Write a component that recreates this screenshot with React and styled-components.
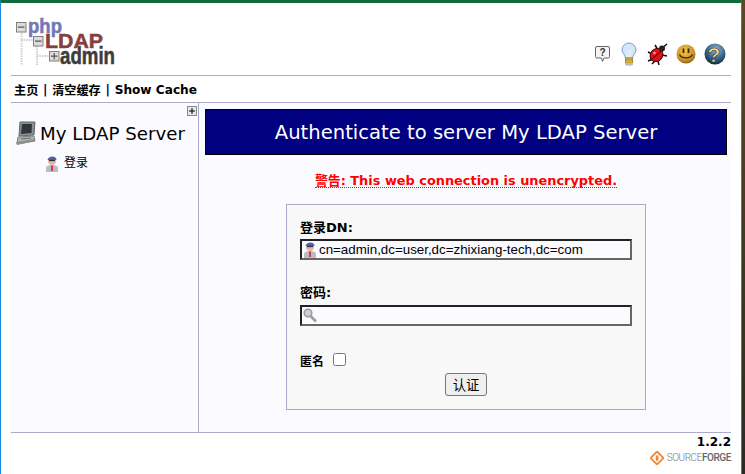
import React from 'react';
import styled, { createGlobalStyle } from 'styled-components';

const GlobalStyle = createGlobalStyle`
  html, body {
    margin: 0;
    padding: 0;
    background: #3a3324;
    overflow: hidden;
  }
`;

const Screen = styled.div`
  width: 745px;
  height: 474px;
  display: flex;
  background: linear-gradient(180deg, #5a4a22, #2c2a22);
  font-family: "DejaVu Sans", "Noto Sans CJK SC", sans-serif;
  color: #000;
`;

const Window = styled.div`
  width: 742px;
  height: 474px;
  box-sizing: border-box;
  border-left: 1px solid #1a8ae0;
  border-right: 1px solid #1a8ae0;
  border-top: 3px solid #0f6b3a;
  background: #fff;
  padding: 0 10px;
  display: flex;
  flex-direction: column;
`;

const Header = styled.header`
  height: 73px;
  box-sizing: border-box;
  flex: none;
  display: flex;
  justify-content: space-between;
  align-items: flex-end;
  border-bottom: 1px solid #aaaacc;
`;

const Logo = styled.svg`
  width: 104px;
  height: 55px;
  margin: 0 0 4px 3px;
`;

const IconBar = styled.div`
  display: flex;
  align-items: center;
  gap: 8px;
  margin: 0 5px 9px 0;
`;

const Menu = styled.nav`
  height: 27px;
  box-sizing: border-box;
  flex: none;
  display: flex;
  align-items: center;
  padding: 1px 0 0 3px;
  font-size: 12.15px;
  font-weight: bold;
  white-space: pre;
  border-bottom: 1px solid #aaaacc;
`;

const MenuSep = styled.span`
  color: #000050;
  margin: 0 0.5px;
`;

const Body = styled.div`
  height: 329px;
  flex: none;
  display: flex;
  background: #fbfbff;
  border-bottom: 1px solid #aaaacc;
`;

const Sidebar = styled.aside`
  width: 188px;
  box-sizing: border-box;
  flex: none;
  border-right: 1px solid #aaaacc;
  display: flex;
  flex-direction: column;
`;

const ExpandRow = styled.div`
  display: flex;
  justify-content: flex-end;
  padding: 3px 1px 0 0;
  height: 14px;
`;

const ServerRow = styled.div`
  display: flex;
  align-items: center;
  gap: 4px;
  padding: 1px 0 0 4px;
  font-size: 18.2px;
  line-height: 24px;
  white-space: nowrap;
`;

const LoginRow = styled.div`
  display: flex;
  align-items: center;
  gap: 5px;
  padding: 8px 0 0 34px;
  font-size: 12px;
  line-height: 18px;
`;

const Main = styled.main`
  width: 522px;
  margin-left: 6px;
  padding-top: 6px;
  display: flex;
  flex-direction: column;
  align-items: center;
`;

const Title = styled.h1`
  width: 100%;
  height: 46px;
  box-sizing: border-box;
  margin: 0;
  padding-top: 1px;
  display: flex;
  align-items: center;
  justify-content: center;
  background: #000080;
  border: 1px solid #000;
  color: #fff;
  font-size: 19.6px;
  font-weight: normal;
  white-space: nowrap;
`;

const Warning = styled.p`
  margin: 17px 0 16px;
  font-size: 12.9px;
  line-height: 17px;
  font-weight: bold;
  color: #ff0000;
  white-space: nowrap;
  border-bottom: 1px dotted #ff0000;
  height: 15px;
`;

const LoginForm = styled.form`
  width: 360px;
  height: 206px;
  box-sizing: border-box;
  border: 1px solid #aaaacc;
  background: #f8f8f8;
  padding: 13px 13px 0;
  display: flex;
  flex-direction: column;
`;

const FieldLabel = styled.label`
  font-size: 13px;
  line-height: 20px;
  font-weight: bold;
`;

const AnonLabel = styled.label`
  font-size: 12px;
  line-height: 20px;
  font-weight: bold;
  margin-top: 2px;
`;

const InputBox = styled.div`
  width: 332px;
  height: 21px;
  box-sizing: border-box;
  margin: ${(p) => p.$top}px 0 ${(p) => p.$bottom}px;
  display: flex;
  align-items: center;
  gap: 2px;
  padding-left: 1px;
  background: #fbfbff;
  border: 2px solid;
  border-color: #222 #666 #666 #222;
`;

const TextInput = styled.input`
  flex: 1;
  min-width: 0;
  border: 0;
  padding: 0;
  outline: 0;
  background: transparent;
  font-family: "Liberation Sans", sans-serif;
  font-size: 13.33px;
  color: #000;
`;

const AnonRow = styled.div`
  display: flex;
  align-items: center;
  gap: 9px;
  height: 16px;
`;

const AnonBox = styled.input`
  width: 13px;
  height: 13px;
  margin: 0 0 3px 0;
`;

const Submit = styled.button`
  align-self: center;
  width: 42px;
  height: 23px;
  margin: 4px 0 0;
  padding: 0;
  font-family: "Noto Sans CJK SC", sans-serif;
  font-size: 13.33px;
  color: #000;
  background: #efefef;
  border: 1px solid #767676;
  border-radius: 3px;
`;

const Footer = styled.footer`
  flex: 1;
  display: flex;
  flex-direction: column;
  align-items: flex-end;
  padding-top: 2px;
`;

const Version = styled.div`
  font-size: 12px;
  font-weight: bold;
  line-height: 15px;
`;

const ForgeLink = styled.div`
  display: flex;
  align-items: center;
  gap: 3px;
  margin-top: 1px;
  font-family: Roboto, sans-serif;
  font-size: 10px;
  font-weight: 300;
  line-height: 14px;
  color: #777;
  letter-spacing: -0.42px;
`;

const ForgeBold = styled.b`
  color: #666;
  font-weight: 500;
`;

const LogoImage = () => (
  <Logo viewBox="0 0 104 55">
    <path d="M7.500 17V49M7 24H19M23 30V49M23 40H35" stroke="#d0d0d0" strokeWidth="2" strokeDasharray="1.500 1" fill="none" />
    <g fill="#dcdcdc" stroke="#808080">
      <rect x="2.500" y="6.500" width="9.500" height="9.500" />
      <rect x="19.500" y="20.500" width="9.500" height="9.500" />
      <rect x="35.500" y="35.500" width="9.500" height="9.500" />
    </g>
    <path d="M4 11.200H10.500M21 25.200H27.500M37 40.200H43.500M40.200 37V43.500" stroke="#555" strokeWidth="1.200" />
    <g fontFamily="Liberation Sans" fontWeight="bold" strokeWidth=".5">
      <text x="14" y="17" fontSize="20" fill="#7478b4" stroke="#7478b4" textLength="34" lengthAdjust="spacingAndGlyphs">php</text>
      <text x="31" y="32" fontSize="21" fill="#843f3f" stroke="#843f3f" textLength="58" lengthAdjust="spacingAndGlyphs">LDAP</text>
      <text x="46" y="48" fontSize="23" fill="#3d3d3d" stroke="#3d3d3d" textLength="55" lengthAdjust="spacingAndGlyphs">admin</text>
    </g>
  </Logo>
);

const BubbleIcon = () => (
  <svg width="18" height="18" viewBox="0 0 18 18">
    <path d="M2 1.500H13A1.500 1.500 0 0 1 14.500 3V11.500A1.500 1.500 0 0 1 13 13H9L7.500 16.500L6.500 13H2A1.500 1.500 0 0 1 .5 11.500V3A1.500 1.500 0 0 1 2 1.500Z" fill="#f4f4f4" stroke="#666" />
    <text x="7.500" y="11" textAnchor="middle" fontFamily="Liberation Sans" fontWeight="bold" fontSize="10" fill="#333">?</text>
  </svg>
);

const BulbIcon = () => (
  <svg width="18" height="24" viewBox="0 0 18 24">
    <path d="M8 1A7 7 0 0 1 15 8C15 11 12 12.500 11.500 16H4.500C4 12.500 1 11 1 8A7 7 0 0 1 8 1Z" fill="#d6e6fa" stroke="#7f9fc8" />
    <path d="M6 7C7 9 7 12 7 15M10 7C9 9 9 12 9 15" fill="none" stroke="#f4f4f4" />
    <rect x="4.500" y="16" width="7" height="5" fill="#dcb94a" stroke="#a8892c" />
    <path d="M4.500 18H11.500" stroke="#a8892c" />
    <ellipse cx="8" cy="22.500" rx="4" ry="1.200" fill="#bbb" />
  </svg>
);

const BugIcon = () => (
  <svg width="21" height="22" viewBox="0 0 21 22">
    <path d="M11 7L8 2M5 11L1 9M6 16L1 18M11 18L12 22M15 12L20 13M14 6L20 1M9 17L5 21" stroke="#111" strokeWidth="1.500" fill="none" />
    <ellipse cx="9.500" cy="12" rx="6" ry="7" transform="rotate(40 9.500 12)" fill="#e01018" stroke="#500" />
    <path d="M5 16L14 8" stroke="#300" />
    <circle cx="15" cy="5.500" r="3" fill="#222" />
    <circle cx="7.500" cy="10" r="1.300" fill="#ff9a9a" />
  </svg>
);

const SmileIcon = () => (
  <svg width="20" height="21" viewBox="0 0 20 21">
    <defs>
      <radialGradient id="smile" cx="45%" cy="35%" r="70%">
        <stop offset="0%" stopColor="#f6c64a" />
        <stop offset="70%" stopColor="#c98f22" />
        <stop offset="100%" stopColor="#6f5520" />
      </radialGradient>
    </defs>
    <circle cx="10" cy="10" r="9.500" fill="url(#smile)" />
    <path d="M7.500 4.500V9M12.500 4.500V9" stroke="#3a2a08" strokeWidth="1.800" />
    <path d="M3.500 10.500C5.500 15 14.500 15 16.500 10.500" fill="none" stroke="#3a2a08" strokeWidth="1.300" />
  </svg>
);

const HelpIcon = () => (
  <svg width="22" height="22" viewBox="0 0 22 22">
    <defs>
      <radialGradient id="ball" cx="55%" cy="30%" r="75%">
        <stop offset="0%" stopColor="#9fb6c8" />
        <stop offset="55%" stopColor="#35688f" />
        <stop offset="100%" stopColor="#14222e" />
      </radialGradient>
    </defs>
    <circle cx="11" cy="11" r="10.500" fill="url(#ball)" />
    <text x="10" y="19" textAnchor="middle" fontFamily="Liberation Sans" fontWeight="bold" fontSize="21" fill="#f3dfa0" stroke="#2a2a1a" strokeWidth=".6">?</text>
  </svg>
);

const ExpandIcon = () => (
  <svg width="10" height="10" viewBox="0 0 10 10">
    <rect x=".5" y=".5" width="9" height="9" fill="#e8e8e8" stroke="#7f8f8f" />
    <path d="M2 5H8M5 2V8" stroke="#000" />
  </svg>
);

const ComputerIcon = () => (
  <svg width="21" height="25" viewBox="0 0 21 25">
    <path d="M5 1H20L19 14L4 15Z" fill="#8a8f92" stroke="#63676a" />
    <path d="M7 3H17L16.500 12L6 13Z" fill="#30373c" />
    <path d="M3 16L19 15L20 20L2 23Z" fill="#b4b8b6" stroke="#7c7f7d" />
    <path d="M1 21L20 18L20 20L2 24Z" fill="#8c908e" />
    <path d="M6 18L16 17" stroke="#666" />
  </svg>
);

const PersonIcon = () => (
  <svg width="14" height="17" viewBox="0 0 14 17">
    <path d="M1 17V13C1 11 4 10 7 10C10 10 13 11 13 13V17Z" fill="#b8bcc8" />
    <path d="M6 10.500H8L8 16H6Z" fill="#d5403a" />
    <circle cx="7" cy="6" r="4" fill="#eab89a" />
    <path d="M2.500 5C3 1 11 0 11.500 5Z" fill="#5560a8" />
    <path d="M4 5.500H10" stroke="#2a2f60" strokeWidth="1.300" />
  </svg>
);

const KeyIcon = () => (
  <svg width="15" height="15" viewBox="0 0 15 15">
    <circle cx="5" cy="5" r="3.800" fill="#cfcfcf" stroke="#9a9a9a" strokeWidth="1.500" />
    <path d="M7.500 8L13 13.500" stroke="#a0a0a0" strokeWidth="2.800" />
  </svg>
);

const ForgeIcon = () => (
  <svg width="14" height="14" viewBox="0 0 14 14">
    <path d="M7 .5L13.500 7L7 13.500L.5 7Z" fill="none" stroke="#f0883a" strokeWidth="1.800" />
    <path d="M7 3.500C9 6 9.500 8 7 10.500C5 8.500 5 6.500 7 3.500Z" fill="#f0883a" />
  </svg>
);

export default function App() {
  return (
    <Screen>
      <GlobalStyle />
      <Window>
        <Header>
          <LogoImage />
          <IconBar>
            <BubbleIcon />
            <BulbIcon />
            <BugIcon />
            <SmileIcon />
            <HelpIcon />
          </IconBar>
        </Header>
        <Menu>
          主页 <MenuSep>|</MenuSep> 清空缓存 <MenuSep>|</MenuSep> Show Cache
        </Menu>
        <Body>
          <Sidebar>
            <ExpandRow>
              <ExpandIcon />
            </ExpandRow>
            <ServerRow>
              <ComputerIcon />
              My LDAP Server
            </ServerRow>
            <LoginRow>
              <PersonIcon />
              登录
            </LoginRow>
          </Sidebar>
          <Main>
            <Title>Authenticate to server My LDAP Server</Title>
            <Warning>警告: This web connection is unencrypted.</Warning>
            <LoginForm onSubmit={(e) => e.preventDefault()}>
              <FieldLabel>登录DN:</FieldLabel>
              <InputBox $top={1} $bottom={23}>
                <PersonIcon />
                <TextInput defaultValue="cn=admin,dc=user,dc=zhixiang-tech,dc=com" />
              </InputBox>
              <FieldLabel>密码:</FieldLabel>
              <InputBox $top={2} $bottom={27}>
                <KeyIcon />
                <TextInput type="password" />
              </InputBox>
              <AnonRow>
                <AnonLabel>匿名</AnonLabel>
                <AnonBox type="checkbox" />
              </AnonRow>
              <Submit type="submit">认证</Submit>
            </LoginForm>
          </Main>
        </Body>
        <Footer>
          <Version>1.2.2</Version>
          <ForgeLink>
            <ForgeIcon />
            <span>SOURCE<ForgeBold>FORGE</ForgeBold></span>
          </ForgeLink>
        </Footer>
      </Window>
    </Screen>
  );
}
